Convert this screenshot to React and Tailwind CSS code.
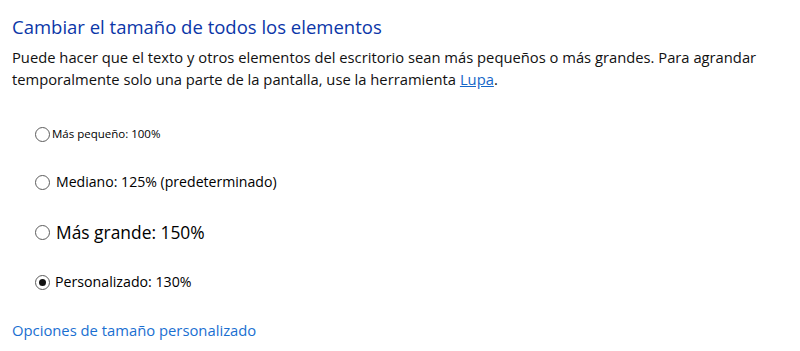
function Radio({ checked }) {
  return (
    <span className="relative flex h-[15px] w-[15px] shrink-0 items-center justify-center rounded-full border border-[#5c5c5c] bg-white">
      {checked && <span className="h-[7px] w-[7px] rounded-full bg-[#111]" />}
    </span>
  );
}

function Option({ checked, label, textClass, gap }) {
  return (
    <label className="flex h-[24px] items-center">
      <Radio checked={checked} />
      <span className={`${gap} ${textClass} whitespace-nowrap text-[#000]`}>{label}</span>
    </label>
  );
}

export default function App() {
  return (
    <div
      className="h-[351px] w-[800px] overflow-hidden bg-white pl-[12px] pt-[13px]"
      style={{ fontFamily: '"Segoe UI", "Open Sans", "Noto Sans", sans-serif' }}
    >
      <h1 className="text-[18.5px] leading-[28px] text-[#0b36a8]">
        Cambiar el tamaño de todos los elementos
      </h1>
      <p className="mt-[5px] w-[770px] text-[14.75px] leading-[22px] text-[#111]">
        Puede hacer que el texto y otros elementos del escritorio sean más pequeños o más grandes. Para agrandar
        temporalmente solo una parte de la pantalla, use la herramienta{" "}
        <a href="#" className="text-[#1566c8] underline">Lupa</a>.
      </p>
      <div className="mt-[32px] flex flex-col pl-[23px]">
        <Option label="Más pequeño: 100%" textClass="text-[11.5px]" gap="ml-[2px]" />
        <div className="mt-[24px]">
          <Option label="Mediano: 125% (predeterminado)" textClass="text-[14.1px]" gap="ml-[6px]" />
        </div>
        <div className="mt-[26px]">
          <Option label="Más grande: 150%" textClass="text-[17.4px]" gap="ml-[6px]" />
        </div>
        <div className="mt-[26px]">
          <Option checked label="Personalizado: 130%" textClass="text-[14.2px]" gap="ml-[5px]" />
        </div>
      </div>
      <a href="#" className="mt-[25px] block text-[14.8px] leading-[22px] text-[#1a6fd1]">
        Opciones de tamaño personalizado
      </a>
    </div>
  );
}
